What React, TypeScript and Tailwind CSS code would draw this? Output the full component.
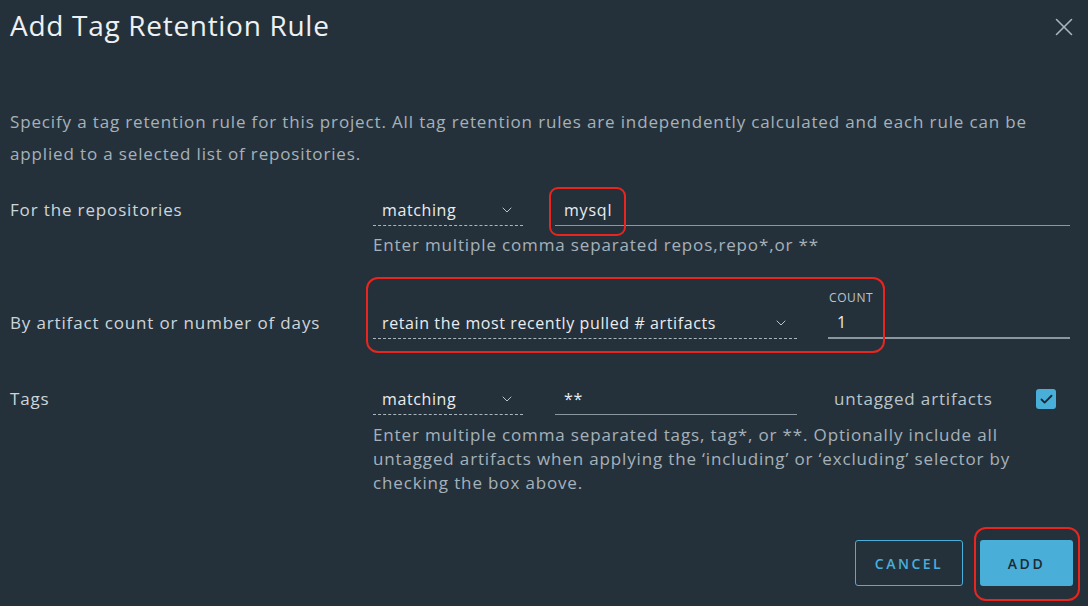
import { ChevronDown, X, Check } from "lucide-react";

const font = { fontFamily: '"Open Sans", "Liberation Sans", sans-serif' };

function Select({ value, width }: { value: string; width: string }) {
  return (
    <div className={`${width} h-[32px] flex items-center justify-between pl-[9px] pr-[8px] border-b border-dashed border-[#a9b6be]`}>
      <span className="text-[16px] tracking-[0.6px] text-[#e9ecef]">{value}</span>
      <ChevronDown size={16} strokeWidth={1.5} className="text-[#b9c5cc]" />
    </div>
  );
}

function Input({ value, width, className = "" }: { value: string; width: string; className?: string }) {
  return (
    <div className={`${width} h-[32px] flex items-center pl-[9px] border-b border-[#8a979f] ${className}`}>
      <span className="text-[16px] tracking-[0.8px] text-[#e9ecef]">{value}</span>
    </div>
  );
}

export default function App() {
  return (
    <div style={font} className="w-[1088px] h-[606px] bg-[#25313a] overflow-hidden relative text-[#cdd5da]">
      {/* header */}
      <div className="flex items-start justify-between pl-[10px] pr-[9px] pt-[6px] h-[106px]">
        <h1 className="text-[28px] text-[#eef1f3] leading-[38px] tracking-[0.7px]">Add Tag Retention Rule</h1>
        <X size={30} strokeWidth={1.3} className="text-[#a9b6be] mt-[6px]" />
      </div>

      <div className="pl-[10px] pr-[18px] text-[17px] tracking-[0.85px]">
        <p className="leading-[32px] text-[#a5b2ba]">
          Specify a tag retention rule for this project. All tag retention rules are independently calculated and each rule can be applied to a selected list of repositories.
        </p>

        {/* repositories */}
        <div className="flex mt-[24px]">
          <div className="w-[363px] h-[32px] flex items-center text-[#cdd5da]">For the repositories</div>
          <div className="flex-1">
            <div className="flex gap-[32px]">
              <Select value="matching" width="w-[150px]" />
              <div className="relative flex-1">
                <Input value="mysql" width="w-full" />
                <div className="absolute left-[-6px] top-[-7px] w-[77px] h-[49px] border-2 border-[#e8251f] rounded-[9px]" />
              </div>
            </div>
            <div className="text-[#a5b2ba] leading-[24px] mt-[7px]">Enter multiple comma separated repos,repo*,or **</div>
          </div>
        </div>

        {/* count */}
        <div className="flex mt-[32px] relative">
          <div className="w-[363px] pt-[18px] h-[50px] flex items-center text-[#cdd5da]">By artifact count or number of days</div>
          <div className="flex-1 flex gap-[31px] items-end">
            <Select value="retain the most recently pulled # artifacts" width="w-[424px]" />
            <div className="flex-1">
              <div className="text-[12px] text-[#b9c5cc] tracking-[0.6px] leading-[18px] pl-[1px]">COUNT</div>
              <Input value="1" width="w-full" className="border-b-2" />
            </div>
          </div>
          <div className="absolute left-[356px] top-[-12px] w-[519px] h-[76px] border-2 border-[#e8251f] rounded-[12px]" />
        </div>

        {/* tags */}
        <div className="flex mt-[44px]">
          <div className="w-[363px] h-[32px] flex items-center text-[#cdd5da]">Tags</div>
          <div className="flex-1">
            <div className="flex items-center">
              <Select value="matching" width="w-[150px]" />
              <Input value="**" width="w-[242px]" className="ml-[32px]" />
              <span className="ml-[37px] text-[#b9c5cc]">untagged artifacts</span>
              <div className="ml-auto mr-[14px] w-[20px] h-[20px] rounded-[3px] bg-[#49afd9] flex items-center justify-center">
                <Check size={15} strokeWidth={3} className="text-[#1e2a32]" />
              </div>
            </div>
            <div className="text-[#a5b2ba] leading-[24px] mt-[8px] pr-[20px]">
              Enter multiple comma separated tags, tag*, or **. Optionally include all untagged artifacts when applying the ‘including’ or ‘excluding’ selector by checking the box above.
            </div>
          </div>
        </div>
      </div>

      {/* footer */}
      <div className="absolute right-[15px] top-[540px] flex gap-[17px]">
        <button className="w-[108px] h-[46px] border border-[#49afd9] rounded-[3px] text-[#49afd9] text-[14px] font-semibold tracking-[2.5px]">CANCEL</button>
        <div className="relative">
          <button className="w-[93px] h-[46px] bg-[#49afd9] rounded-[3px] text-[#1e2a32] text-[14px] font-semibold tracking-[2.5px]">ADD</button>
          <div className="absolute left-[-6px] top-[-13px] w-[106px] h-[74px] border-2 border-[#e8251f] rounded-[12px]" />
        </div>
      </div>
    </div>
  );
}
